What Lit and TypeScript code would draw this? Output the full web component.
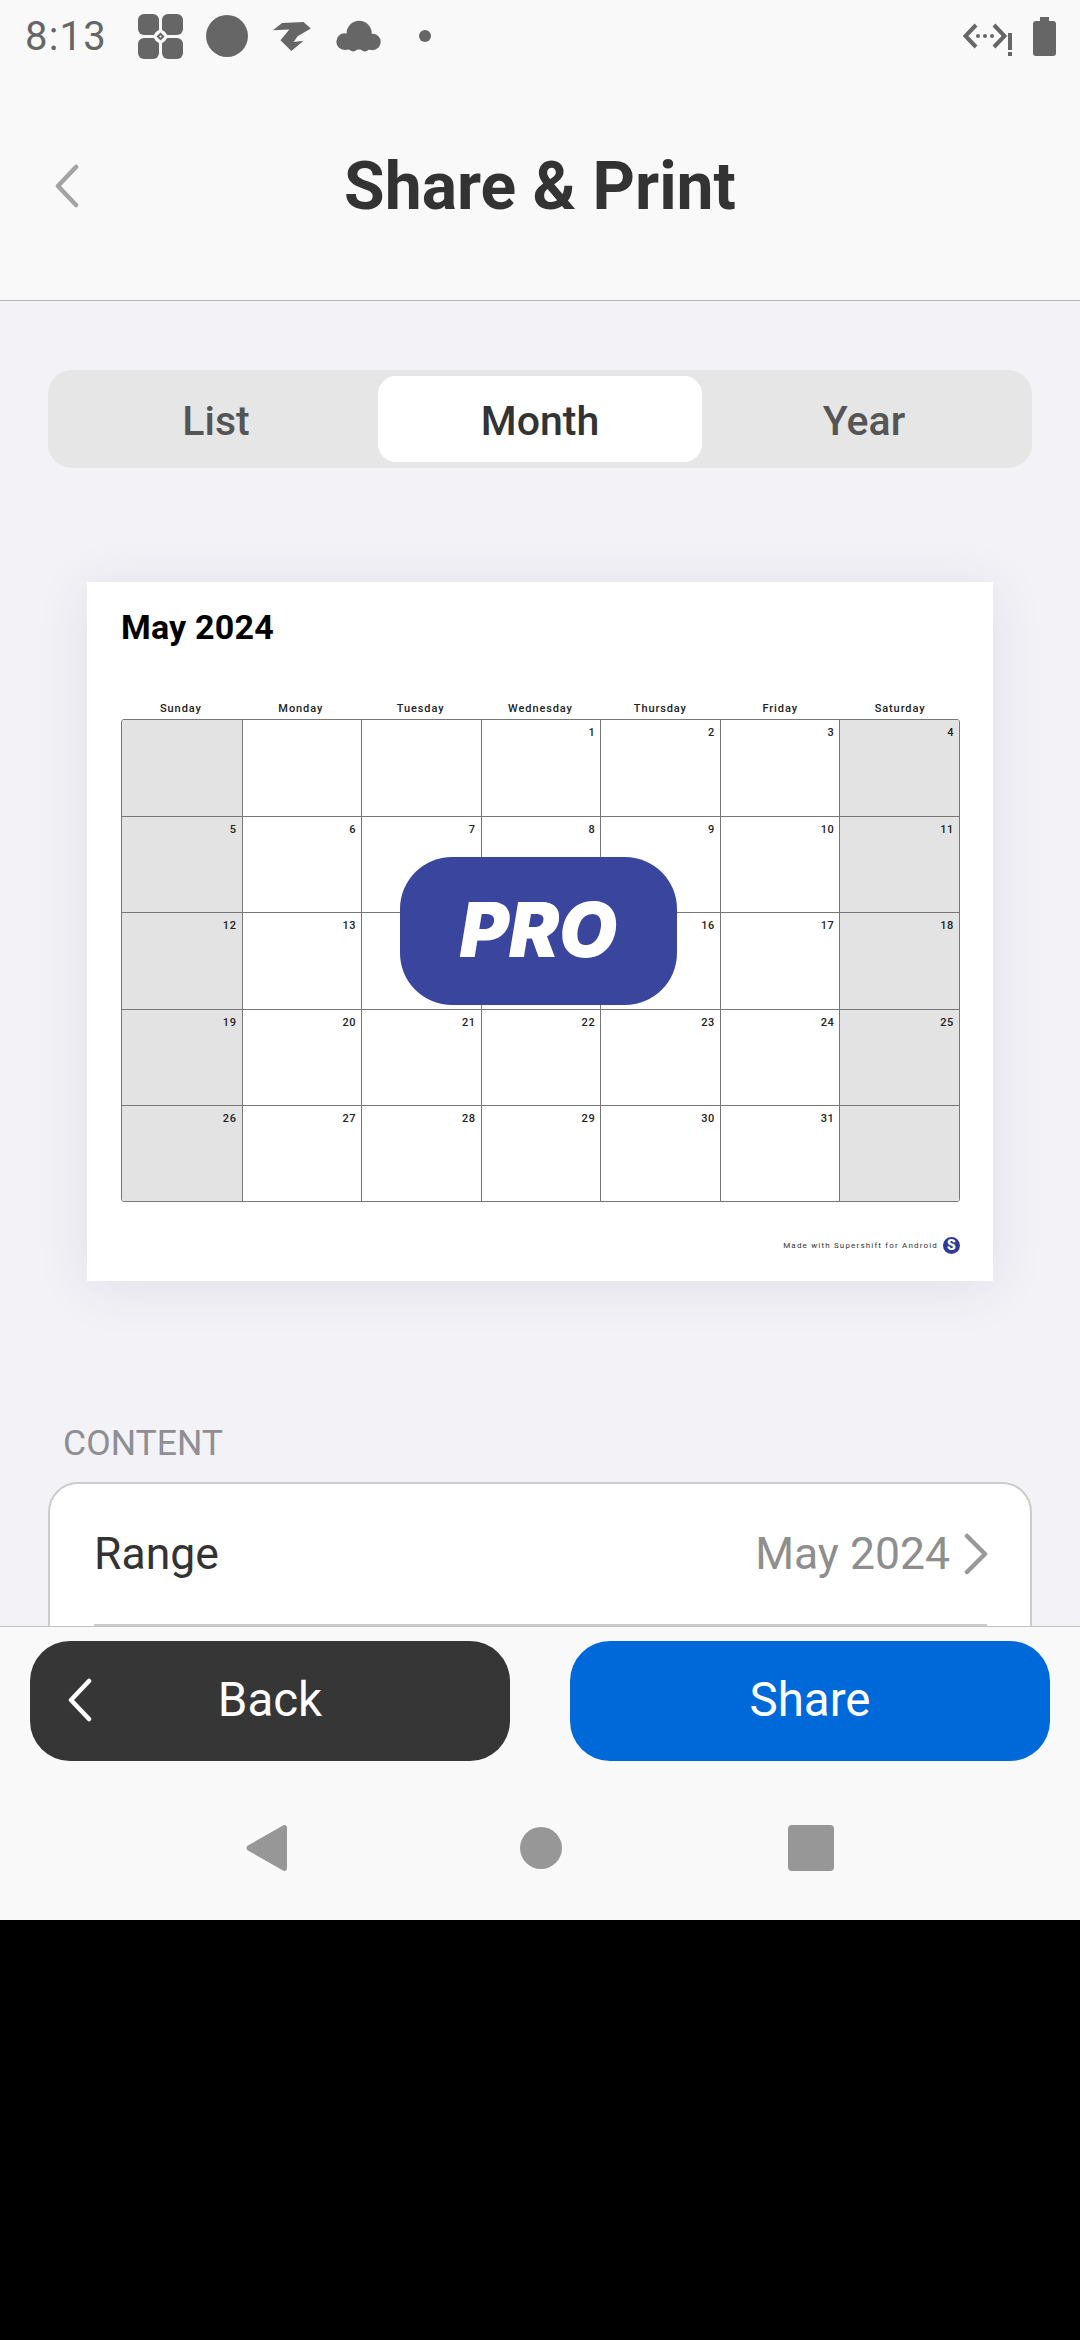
import { LitElement, html, css, svg } from "lit";
import { customElement } from "lit/decorators.js";

const WEEKDAYS = ["Sunday", "Monday", "Tuesday", "Wednesday", "Thursday", "Friday", "Saturday"];

// may 2024 starts on a wednesday, the last cell stays empty
// 14 and 15 sit under the PRO badge and never show
const DAYS: (number | null)[] = [
  null, null, null,
  ...Array.from({ length: 31 }, (_, i) => i + 1),
  null,
].map((d) => (d === 14 || d === 15 ? null : d));

const leaf = svg`
  <rect x="0" y="0" width="21" height="21" rx="6" />
  <rect x="24" y="0" width="21" height="21" rx="6" />
  <rect x="0" y="24" width="21" height="21" rx="6" />
  <rect x="24" y="24" width="21" height="21" rx="6" />
  <circle cx="22.5" cy="22.5" r="6.5" fill="#f9f9f9" />
  <path d="M22.5 18.5l4 4-4 4-4-4z" />
  <circle cx="22.5" cy="22.5" r="1" fill="#f9f9f9" />
`;

@customElement("app-root")
export class AppRoot extends LitElement {
  static styles = css`
    :host {
      display: block;
      height: 2340px;
      width: 1080px;
      background: #000;
      font-family: Roboto, sans-serif;
      overflow: hidden;
    }
    .screen {
      height: 1920px;
      display: flex;
      flex-direction: column;
      background: #f9f9f9;
    }

    .status {
      height: 72px;
      display: flex;
      align-items: center;
      padding: 0 24px 0 25px;
      color: #666;
      flex: none;
    }
    .time {
      font-size: 40px;
      width: 113px;
      letter-spacing: 1.2px;
    }
    .status svg {
      display: block;
      fill: #666;
      flex: none;
    }
    .ic-leaf { margin-right: 23px; }
    .ic-circle { margin-right: 24px; }
    .ic-zig { margin-right: 24px; }
    .ic-cloud { margin-right: 38px; }
    .status .spacer { flex: 1; }
    .status .ic-net {
      margin-right: 19px;
      margin-top: 8px;
    }

    .titlebar {
      height: 228px;
      flex: none;
      display: grid;
      grid-template-columns: 1fr auto 1fr;
      align-items: center;
      border-bottom: 1px solid #b4b4bc;
      box-sizing: content-box;
    }
    .titlebar svg {
      margin-left: 54px;
      display: block;
    }
    .titlebar h1 {
      margin: 0;
      font-size: 66px;
      font-weight: 700;
      color: #333;
    }

    .main {
      height: 1325px;
      flex: none;
      overflow: hidden;
      background: #f2f2f7;
      padding: 69px 48px 0;
      box-sizing: border-box;
    }

    .segment {
      height: 98px;
      box-sizing: border-box;
      padding: 6px;
      border-radius: 24px;
      background: #e6e6e6;
      display: grid;
      grid-template-columns: repeat(3, 1fr);
      font-size: 41px;
      font-weight: 500;
      color: #555;
    }
    .segment div {
      display: flex;
      align-items: center;
      justify-content: center;
      padding-top: 3px;
      box-sizing: border-box;
      border-radius: 18px;
    }
    .segment .on {
      background: #fff;
      color: #333;
    }

    .paper {
      position: relative;
      margin: 114px 39px 0 39px;
      height: 699px;
      box-sizing: border-box;
      padding: 25px 33px 0 34px;
      background: #fff;
      box-shadow: 0 6px 50px rgba(60, 60, 90, 0.1);
    }
    .paper h2 {
      margin: 0;
      font-size: 34px;
      line-height: 40px;
      font-weight: 700;
      letter-spacing: 0.2px;
      color: #000;
    }
    .weekdays {
      margin-top: 50px;
      height: 22px;
      display: grid;
      grid-template-columns: repeat(7, 1fr);
      text-align: center;
      font-size: 11px;
      line-height: 24px;
      font-weight: 500;
      letter-spacing: 0.9px;
      color: #222;
    }
    .month {
      display: grid;
      grid-template-columns: repeat(7, 1fr);
      grid-template-rows: repeat(5, 1fr);
      height: 483px;
      border: 1px solid #777;
      border-radius: 3px;
      box-sizing: border-box;
      overflow: hidden;
    }
    .cell {
      border-left: 1px solid #777;
      border-top: 1px solid #777;
      padding: 6px 5px 0 0;
      text-align: right;
      font-size: 11px;
      line-height: 14px;
      font-weight: 500;
      letter-spacing: 0.6px;
      color: #222;
    }
    .cell.first { border-left: 0; }
    .cell.top { border-top: 0; }
    .cell.off { background: #e3e3e3; }
    .made {
      margin-top: 35px;
      display: flex;
      justify-content: flex-end;
      align-items: center;
      gap: 5px;
      font-size: 8px;
      letter-spacing: 1.17px;
      color: #333;
    }
    .made .logo {
      width: 17px;
      height: 17px;
      border-radius: 50%;
      background: #2f3a94;
      color: #fff;
      font-size: 14px;
      font-weight: 900;
      line-height: 17px;
      text-align: center;
      letter-spacing: 0;
    }
    .pro {
      position: absolute;
      left: 313px;
      top: 275px;
      width: 277px;
      height: 148px;
      padding-bottom: 3px;
      box-sizing: border-box;
      border-radius: 52px;
      background: #3a469d;
      color: #fff;
      display: flex;
      align-items: center;
      justify-content: center;
      font-family: Inter, Roboto, sans-serif;
      font-size: 75px;
      font-style: italic;
      font-weight: 900;
    }

    .label {
      margin: 0 0 0 15px;
      padding-top: 141px;
      font-size: 35.6px;
      line-height: 42px;
      color: #8e8e93;
    }
    .card {
      margin-top: 18px;
      background: #fff;
      border: 2px solid #ccc;
      border-radius: 30px;
      padding: 0 43px 0 44px;
      height: 300px;
      box-sizing: border-box;
    }
    .row {
      height: 140px;
      display: flex;
      align-items: center;
      border-bottom: 2px solid #ccc;
      font-size: 44.5px;
      color: #333;
    }
    .row .value {
      margin-left: auto;
      color: #8e8e8e;
    }
    .row svg {
      margin-left: 14px;
      margin-right: -1px;
      display: block;
    }

    .bottom {
      flex: 1;
      border-top: 1px solid #c0c0c0;
      background: #f9f9f9;
      padding-top: 14px;
    }
    .buttons {
      display: flex;
      justify-content: space-between;
      padding: 0 30px;
    }
    .btn {
      width: 480px;
      height: 120px;
      padding-bottom: 2px;
      box-sizing: border-box;
      border-radius: 40px;
      color: #fff;
      font-size: 47.5px;
      display: grid;
      grid-template-columns: 1fr auto 1fr;
      align-items: center;
    }
    .btn svg {
      margin-left: 37px;
      display: block;
    }
    .btn.back { background: #363636; }
    .btn.share { background: #0069d9; }
    .btn span { grid-column: 2; }
    .nav {
      margin-top: 62px;
      height: 50px;
      display: flex;
      align-items: center;
      padding-left: 245px;
    }
    .nav svg {
      display: block;
      fill: #979797;
      flex: none;
    }
    .nav .c { margin-left: 231px; }
    .nav .s { margin-left: 226px; }
  `;

  render() {
    return html`
      <div class="screen">
        ${this.renderStatus()}
        <div class="titlebar">
          <svg width="26" height="44" viewBox="0 0 26 44" fill="none" stroke="#a3a3a3" stroke-width="4.5" stroke-linecap="round" stroke-linejoin="round">
            <path d="M22 3L4 22l18 19" />
          </svg>
          <h1>Share &amp; Print</h1>
        </div>
        <div class="main">
          <div class="segment">
            <div>List</div>
            <div class="on">Month</div>
            <div>Year</div>
          </div>
          ${this.renderPaper()}
          <p class="label">CONTENT</p>
          <div class="card">
            <div class="row">
              Range
              <span class="value">May 2024</span>
              <svg width="24" height="42" viewBox="0 0 24 42" fill="none" stroke="#999" stroke-width="4.5" stroke-linecap="round" stroke-linejoin="round">
                <path d="M3 3l18 18L3 39" />
              </svg>
            </div>
          </div>
        </div>
        <div class="bottom">
          <div class="buttons">
            <div class="btn back">
              <svg width="26" height="44" viewBox="0 0 26 44" fill="none" stroke="#fff" stroke-width="4.5" stroke-linecap="round" stroke-linejoin="round">
                <path d="M22 3L4 22l18 19" />
              </svg>
              <span>Back</span>
            </div>
            <div class="btn share"><span>Share</span></div>
          </div>
          <div class="nav">
            <svg width="44" height="50" viewBox="0 0 44 50">
              <path d="M3 22.5L38 2.5c2-1 4 0 4 2.5v40c0 2.5-2 3.5-4 2.5L3 27.5c-2-1-2-4 0-5z" />
            </svg>
            <svg class="c" width="42" height="42" viewBox="0 0 42 42"><circle cx="21" cy="21" r="21" /></svg>
            <svg class="s" width="46" height="46" viewBox="0 0 46 46"><rect width="46" height="46" rx="4" /></svg>
          </div>
        </div>
      </div>
    `;
  }

  renderStatus() {
    return html`
      <div class="status">
        <span class="time">8:13</span>
        <svg class="ic-leaf" width="45" height="45" viewBox="0 0 45 45">${leaf}</svg>
        <svg class="ic-circle" width="42" height="42" viewBox="0 0 42 42"><circle cx="21" cy="21" r="21" /></svg>
        <svg class="ic-zig" width="40" height="31" viewBox="820 64 120 94">
          <path d="M822 92L850 70 915 67 937 87 897 110 885 128 915 124 878 155 845 122 872 90z" />
        </svg>
        <svg class="ic-cloud" width="45" height="32" viewBox="1008 60 136 96">
          <circle cx="1078" cy="100" r="38" />
          <circle cx="1034" cy="125" r="25" />
          <circle cx="1118" cy="126" r="25" />
          <circle cx="1060" cy="140" r="15" />
          <circle cx="1095" cy="140" r="15" />
          <rect x="1034" y="105" width="86" height="44" />
        </svg>
        <svg width="12" height="12" viewBox="0 0 12 12"><circle cx="6" cy="6" r="6" /></svg>
        <span class="spacer"></span>
        <svg class="ic-net" width="52" height="36" viewBox="0 0 52 36">
          <g fill="none" stroke="#666" stroke-width="4">
            <path d="M14 3L3.5 14 14 25" />
            <path d="M32 3l10.5 11L32 25" />
          </g>
          <circle cx="16" cy="14" r="2" />
          <circle cx="23" cy="14" r="2" />
          <circle cx="30" cy="14" r="2" />
          <rect x="46" y="11" width="4" height="17" />
          <rect x="46" y="30" width="4" height="4" />
        </svg>
        <svg width="23" height="39" viewBox="0 0 23 39">
          <path d="M7 0h9v4h4c2 0 3 1 3 3v29c0 2-1 3-3 3H3c-2 0-3-1-3-3V7c0-2 1-3 3-3h4z" />
        </svg>
      </div>
    `;
  }

  renderPaper() {
    return html`
      <div class="paper">
        <h2>May 2024</h2>
        <div class="weekdays">${WEEKDAYS.map((d) => html`<div>${d}</div>`)}</div>
        <div class="month">
          ${DAYS.map((d, i) => {
            const col = i % 7;
            const cls = [
              "cell",
              col === 0 ? "first off" : "",
              col === 6 ? "off" : "",
              i < 7 ? "top" : "",
            ].join(" ");
            return html`<div class=${cls}>${d ?? ""}</div>`;
          })}
        </div>
        <div class="made">
          <span>Made with Supershift for Android</span>
          <span class="logo">S</span>
        </div>
        <div class="pro">PRO</div>
      </div>
    `;
  }
}
